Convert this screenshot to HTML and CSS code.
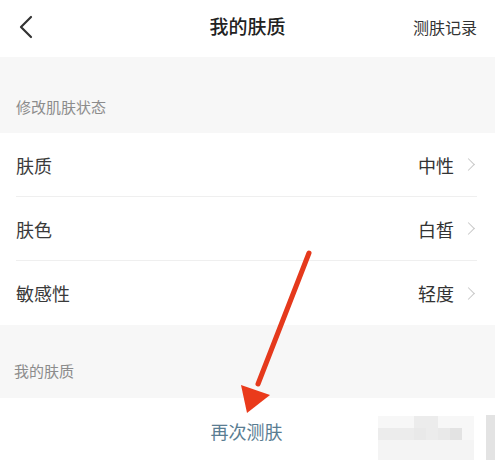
FILE: index.html
```html
<!DOCTYPE html>
<html lang="zh-CN">
<head>
  <meta charset="UTF-8" />
  <meta name="viewport" content="width=device-width, initial-scale=1.0"/>
  <title>我的肤质</title>
  <link rel="stylesheet" href="styles.css">
</head>
<body>

  <div class="page">
    <header class="nav">
      <svg class="nav-back" width="14" height="24" viewBox="0 0 14 24">
        <path d="M12 2 L2 12 L12 22" fill="none" stroke="#333" stroke-width="2.2" stroke-linecap="round" stroke-linejoin="round"/>
      </svg>
      <h1 class="nav-title">我的肤质</h1>
      <span class="nav-link">测肤记录</span>
    </header>

    <div class="section-label first">修改肌肤状态</div>

    <ul class="list">
      <li class="list-row">
        <span class="row-name">肤质</span>
        <span class="row-value">中性<i class="chev"></i></span>
      </li>
      <li class="list-row">
        <span class="row-name">肤色</span>
        <span class="row-value">白皙<i class="chev"></i></span>
      </li>
      <li class="list-row">
        <span class="row-name">敏感性</span>
        <span class="row-value">轻度<i class="chev"></i></span>
      </li>
    </ul>

    <div class="section-label second">我的肤质</div>

    <div class="retest">再次测肤</div>

    <!-- 红色箭头标注 -->
    <svg class="mark-arrow" width="495" height="460" viewBox="0 0 495 460">
      <path d="M309 253 L258 384" fill="none" stroke="#e5391c" stroke-width="5" stroke-linecap="round"/>
      <polygon points="247,413 241,385 270,395" fill="#ea3a1b"/>
    </svg>

    <!-- 水印马赛克 -->
    <div class="mosaic">
      <span></span><span></span><span></span><span class="d1"></span><span class="d1"></span><span></span><span></span><span></span>
      <span class="d1"></span><span class="d1"></span><span class="d1"></span><span class="d2"></span><span class="d1"></span><span class="d2"></span><span class="d3"></span><span></span>
      <span class="l"></span><span class="l"></span><span class="l"></span><span class="l"></span><span class="l"></span><span class="l"></span><span class="l"></span><span class="l"></span>
    </div>
    <div class="mosaic-bar"></div>
  </div>

</body>
</html>
```

FILE: styles.css
```css
body {
  margin: 0;
  padding: 0;
  background: #fff;
  font-family: "Noto Sans CJK SC", "Noto Sans", sans-serif;
  color: #333;
}

.page {
  position: relative;
  width: 495px;
  height: 460px;
  overflow: hidden;
}

.nav {
  height: 57px;
  display: flex;
  align-items: center;
  justify-content: space-between;
  padding: 0 18px 0 19px;
  position: relative;
}

.nav-back {
  display: block;
  margin-top: -4px;
}

.nav-title {
  position: absolute;
  left: 0;
  right: 0;
  top: 0;
  margin: 0;
  line-height: 52px;
  text-align: center;
  font-size: 19px;
  font-weight: 500;
  color: #222;
  pointer-events: none;
}

.nav-link {
  font-size: 16px;
  color: #333;
  margin-top: -4px;
}

.section-label {
  background: #f7f7f7;
  box-sizing: border-box;
  font-size: 15px;
  color: #8c8c8c;
  line-height: 24px;
}

.section-label.first {
  height: 76px;
  padding: 38px 0 0 16px;
}

.section-label.second {
  height: 73px;
  padding: 34px 0 0 14px;
}

.list {
  list-style: none;
  margin: 0;
  padding: 0 18px 0 16px;
}

.list-row {
  height: 64px;
  display: flex;
  align-items: center;
  justify-content: space-between;
  border-bottom: 1px solid #efefef;
  box-sizing: border-box;
  font-size: 18px;
  color: #3a3a3a;
}

.list-row:last-child {
  border-bottom: none;
}

.row-value {
  display: flex;
  align-items: center;
  color: #333;
}

.chev {
  display: inline-block;
  width: 8px;
  height: 8px;
  border-top: 1.5px solid #c8c8c8;
  border-right: 1.5px solid #c8c8c8;
  transform: rotate(45deg);
  margin-left: 10px;
  margin-right: 4px;
}

.retest {
  text-align: center;
  font-size: 18px;
  color: #5a7d92;
  line-height: 24px;
  padding-top: 21px;
  margin-left: -2px;
}

.mark-arrow {
  position: absolute;
  left: 0;
  top: 0;
  pointer-events: none;
}

.mosaic {
  position: absolute;
  left: 378px;
  top: 416px;
  width: 96px;
  height: 44px;
  display: grid;
  grid-template-columns: repeat(8, 1fr);
  grid-template-rows: 12px 12px 20px;
  background: #fafafa;
}

.mosaic span { background: #f7f7f7; }
.mosaic .d1 { background: #ececec; }
.mosaic .d2 { background: #e9e9e9; }
.mosaic .d3 { background: #e3e3e3; }
.mosaic .l { background: #f4f4f4; }

.mosaic-bar {
  position: absolute;
  left: 486px;
  top: 415px;
  width: 9px;
  height: 45px;
  background: #e3e3e3;
}
```
